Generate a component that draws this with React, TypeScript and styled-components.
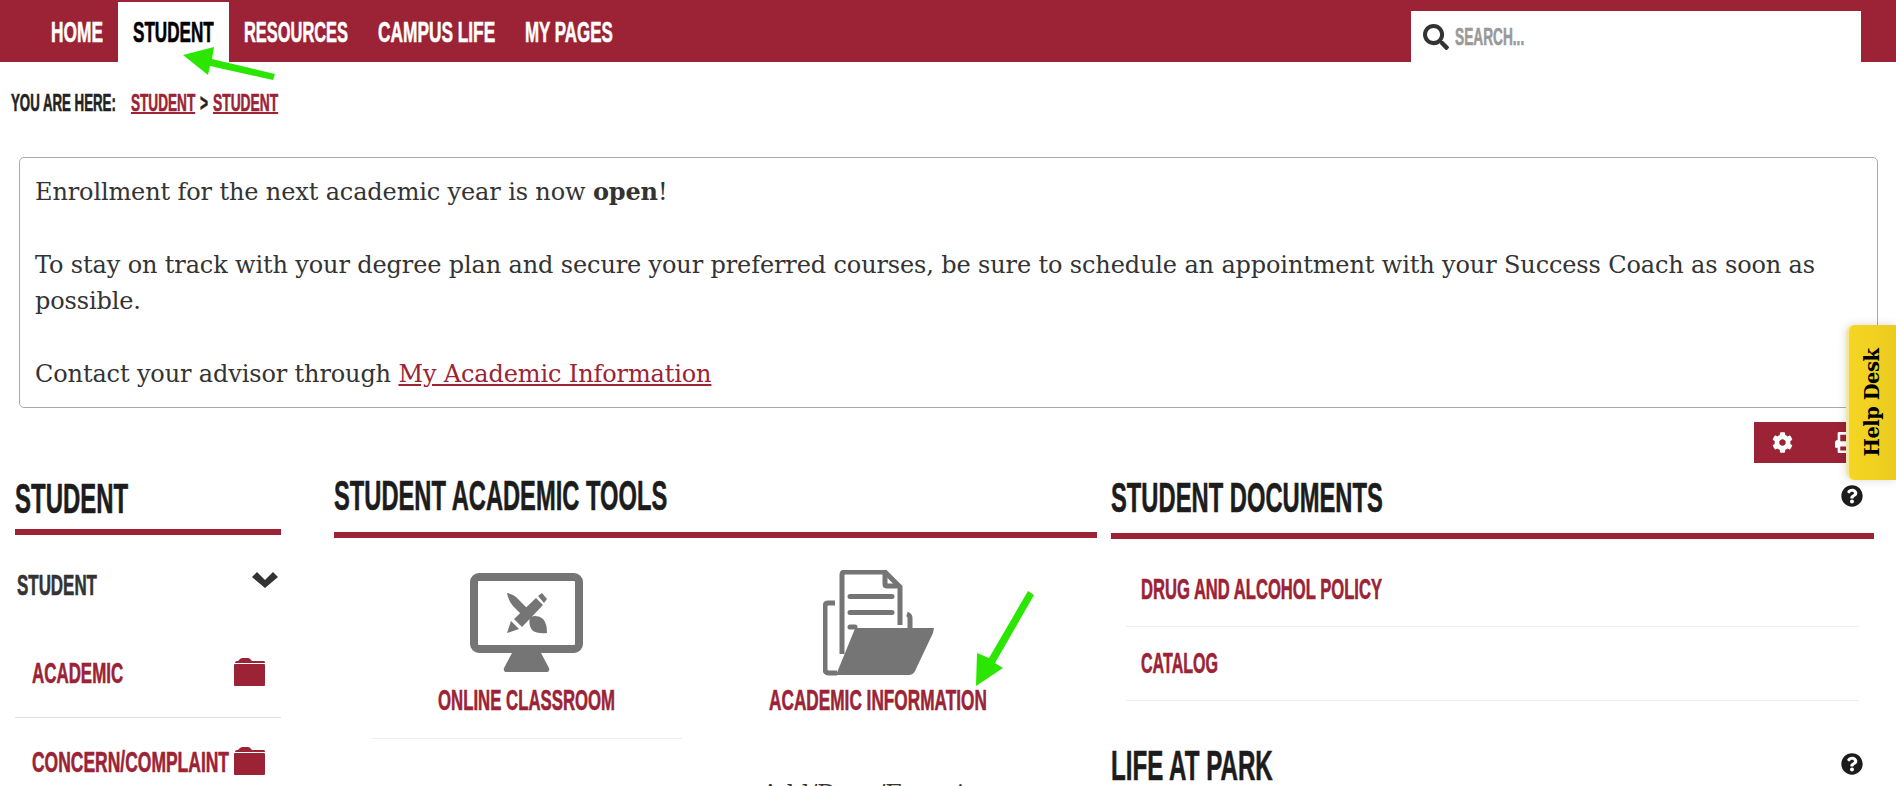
import React, { useLayoutEffect, useRef, useState } from "react";
import styled, { createGlobalStyle } from "styled-components";
import { FaCog, FaPrint, FaQuestionCircle, FaSearch } from "react-icons/fa";

const maroon = "#9b2335";
const display = `"Liberation Sans", Arial, sans-serif`;

const GlobalStyle = createGlobalStyle`
  html, body {
    margin: 0;
    padding: 0;
    height: 786px;
    overflow: hidden;
    background: #fff;
    font-family: "DejaVu Serif", serif;
    color: #333;
  }
`;

const Page = styled.div`
  position: relative;
  width: 1896px;
  height: 786px;
  overflow: hidden;
`;

const FitBox = styled.span<{ $w: number }>`
  display: inline-block;
  width: ${(p) => p.$w}px;
  white-space: nowrap;
`;

const FitInner = styled.span`
  display: inline-block;
  transform-origin: 0 50%;
  -webkit-text-stroke: 0.6px currentColor;
`;

// the site's condensed face isn't installed, so squeeze the text to its measured width
function Fit({ w, children }: { w: number; children: React.ReactNode }) {
  const ref = useRef<HTMLSpanElement>(null);
  const [k, setK] = useState(0.6);

  useLayoutEffect(() => {
    if (ref.current) setK(w / ref.current.offsetWidth);
  }, [w]);

  return (
    <FitBox $w={w}>
      <FitInner ref={ref} style={{ transform: `scaleX(${k})` }}>
        {children}
      </FitInner>
    </FitBox>
  );
}

const Header = styled.header`
  height: 62px;
  background: ${maroon};
  display: flex;
  align-items: flex-end;
  justify-content: space-between;
  padding: 0 35px 0 36px;
`;

const Nav = styled.nav`
  display: flex;
  height: 60px;
`;

const NavItem = styled.a<{ $active?: boolean }>`
  display: flex;
  align-items: center;
  padding: 0 15px;
  font: bold 30px ${display};
  color: ${(p) => (p.$active ? "#000" : "#fff")};
  background: ${(p) => (p.$active ? "#fff" : "transparent")};
`;

const SearchBox = styled.div`
  width: 450px;
  height: 51px;
  background: #fff;
  display: flex;
  align-items: center;
  gap: 6px;
  padding: 0 12px;
  box-sizing: border-box;
  font: bold 24px ${display};
  color: #999;
  svg {
    color: #333;
  }
`;

const Crumbs = styled.div`
  display: flex;
  gap: 5px;
  padding: 29px 0 0 11px;
  font: bold 24px/24px ${display};
  color: #222;
`;

const CrumbLink = styled.a`
  color: ${maroon};
  text-decoration: underline;
  text-decoration-thickness: 2px;
`;

const CrumbGap = styled.span`
  width: 5px;
`;

const Notice = styled.div`
  margin: 42px 18px 0 19px;
  height: 251px;
  box-sizing: border-box;
  border: 1px solid #aaa;
  border-radius: 5px;
  padding: 16px 16px 16px 15px;
  font-size: 24px;
  line-height: 36.4px;
  letter-spacing: -0.13px;
  p {
    margin: 0 0 36.4px;
  }
  p:last-child {
    margin: 0;
  }
  a {
    color: ${maroon};
    text-decoration: underline;
  }
`;

const ToolBar = styled.div`
  display: flex;
  justify-content: flex-end;
  margin-top: 14px;
`;

const Tools = styled.div`
  width: 142px;
  height: 41px;
  background: ${maroon};
  color: #fff;
  display: flex;
  align-items: center;
  gap: 42px;
  padding-left: 18px;
  box-sizing: border-box;
`;

const Columns = styled.div`
  display: grid;
  grid-template-columns: 305px 763px 763px;
  column-gap: 14px;
  padding-left: 15px;
  margin-top: 8px;
`;

const SideColumn = styled.section`
  padding-right: 39px;
`;

const Column = styled.section``;

const Heading = styled.div<{ $bar: number; $pad: number; $gap?: number }>`
  box-sizing: border-box;
  display: flex;
  align-items: flex-start;
  justify-content: space-between;
  height: ${(p) => p.$bar}px;
  padding: ${(p) => p.$pad}px 11px 0 0;
  margin-top: ${(p) => p.$gap ?? 0}px;
  border-bottom: 6px solid ${maroon};
  font: bold 42px/50px ${display};
  color: #1c1c1c;
  svg {
    color: #1c1c1c;
    margin-top: 12px;
  }
`;

const MenuHead = styled.div`
  display: flex;
  justify-content: space-between;
  padding: 33px 3px 27px 2px;
  font: bold 29px/34px ${display};
  color: #333;
  svg {
    margin-top: 3px;
  }
`;

const MenuItem = styled.a`
  display: flex;
  align-items: center;
  justify-content: space-between;
  height: 88px;
  padding: 0 16px 0 17px;
  border-bottom: 1px solid #ddd;
  font: bold 29px ${display};
  color: ${maroon};
  svg {
    margin-top: -3px;
  }
`;

const Tiles = styled.div`
  display: grid;
  grid-template-columns: repeat(2, 351.5px);
  padding: 28px 0 0 17px;
`;

const Tile = styled.a`
  display: flex;
  flex-direction: column;
  align-items: center;
  font: bold 29px/37px ${display};
  color: ${maroon};
`;

const TileIcon = styled.div<{ $lift: number }>`
  height: 116px;
  display: flex;
  align-items: center;
  svg {
    margin-bottom: ${(p) => p.$lift}px;
  }
`;

const Rule = styled.div`
  width: 311px;
  height: 1px;
  background: #eee;
  margin-top: 19px;
`;

const DocList = styled.div`
  padding-top: 14px;
`;

const DocLink = styled.a`
  display: flex;
  align-items: center;
  box-sizing: border-box;
  height: 74px;
  margin: 0 15px;
  padding: 0 15px;
  border-bottom: 1px solid #eee;
  font: bold 29px ${display};
  color: ${maroon};
`;

const TileText = styled.div`
  grid-column: 2;
  margin-top: 37px;
  text-align: center;
  font-size: 24px;
  line-height: 36px;
  letter-spacing: -0.15px;
`;

const HelpDesk = styled.div`
  position: absolute;
  right: 0;
  top: 325px;
  width: 50px;
  height: 155px;
  box-sizing: border-box;
  background: linear-gradient(90deg, #f6d623, #ebcb1f);
  border-left: 3px solid #f3e7a8;
  border-radius: 8px 0 0 8px;
  box-shadow: 0 0 10px rgba(0, 0, 0, 0.15);
  display: flex;
  align-items: center;
  justify-content: center;
  span {
    transform: rotate(-90deg);
    white-space: nowrap;
    font: bold 19.5px "DejaVu Serif", serif;
    letter-spacing: -0.5px;
    color: #000;
  }
`;

const Arrow = styled.svg<{ $x: number; $y: number }>`
  position: absolute;
  left: ${(p) => p.$x}px;
  top: ${(p) => p.$y}px;
  pointer-events: none;
`;

const Chevron = () => (
  <svg width="26" height="17" viewBox="0 0 26 17">
    <path d="M0 6 5 1l8 8 8-8 5 5-13 11z" fill="#333" />
  </svg>
);

const Folder = () => (
  <svg width="31" height="28" viewBox="0 0 31 28">
    <path
      d="M1 5q0-2 2-2h1l2-2q1-1 3-1h5q2 0 3 2l1 1h12q1 0 1 2v0z"
      fill={maroon}
    />
    <rect y="6" width="31" height="22" rx="1" fill={maroon} />
  </svg>
);

const Monitor = () => (
  <svg width="113" height="99" viewBox="0 0 113 99">
    <rect x="4" y="4" width="105" height="72" rx="5" fill="none" stroke="#757575" strokeWidth="8" />
    <path d="M42 80h29l8 15q1 4-3 4H37q-4 0-3-4z" fill="#757575" />
    <path d="M37 20q7 1 12 7l9 9-6 6-9-9q-5-6-6-13z" fill="#757575" />
    <path d="M60 44q8-3 13 2 4 4 4 14-10 1-15-3-4-6-2-13z" fill="#757575" />
    <path d="M44 46 66 25l7 7-21 22zM68 23l4-3 5 6-3 4zM37 60l4-12 8 8z" fill="#757575" />
  </svg>
);

const FolderDoc = () => (
  <svg width="111" height="106" viewBox="0 0 111 106">
    <g fill="none" stroke="#757575" strokeWidth="5">
      <path d="M19 84V5q0-3 3-3h40l15 15v38" />
      <path d="M62 2v12q0 2 2 2h13" />
      <path d="M12 33H5q-3 0-3 4v62q0 4 4 4h8" />
      <path d="M84 44q3 1 3 4v10" />
    </g>
    <path d="M27 26.500h42M27 42.500h42M27 57h5" stroke="#757575" strokeWidth="5" strokeLinecap="round" />
    <path d="M34 58h77l-1 5-18 38q-2 4-6 4H13l18-44q1-3 3-3z" fill="#757575" />
  </svg>
);

export default function App() {
  return (
    <Page>
      <GlobalStyle />
      <Header>
        <Nav>
          <NavItem><Fit w={52}>HOME</Fit></NavItem>
          <NavItem $active><Fit w={81}>STUDENT</Fit></NavItem>
          <NavItem><Fit w={104}>RESOURCES</Fit></NavItem>
          <NavItem><Fit w={117}>CAMPUS LIFE</Fit></NavItem>
          <NavItem><Fit w={88}>MY PAGES</Fit></NavItem>
        </Nav>
        <SearchBox>
          <FaSearch size={26} />
          <Fit w={69}>SEARCH...</Fit>
        </SearchBox>
      </Header>
      <Crumbs>
        <Fit w={105}>YOU ARE HERE:</Fit>
        <CrumbGap />
        <Fit w={64}><CrumbLink>STUDENT</CrumbLink></Fit>
        <Fit w={8}>&gt;</Fit>
        <Fit w={65}><CrumbLink>STUDENT</CrumbLink></Fit>
      </Crumbs>
      <Notice>
        <p>
          Enrollment for the next academic year is now <b>open</b>!
        </p>
        <p>
          To stay on track with your degree plan and secure your preferred courses, be sure to
          schedule an appointment with your Success Coach as soon as possible.
        </p>
        <p>
          Contact your advisor through <a>My Academic Information</a>
        </p>
      </Notice>
      <ToolBar>
        <Tools>
          <FaCog size={21} />
          <FaPrint size={21} />
        </Tools>
      </ToolBar>
      <Columns>
        <SideColumn>
          <Heading $bar={64} $pad={3}><Fit w={113}>STUDENT</Fit></Heading>
          <MenuHead>
            <Fit w={80}>STUDENT</Fit>
            <Chevron />
          </MenuHead>
          <MenuItem>
            <Fit w={91}>ACADEMIC</Fit>
            <Folder />
          </MenuItem>
          <MenuItem>
            <Fit w={197}>CONCERN/COMPLAINT</Fit>
            <Folder />
          </MenuItem>
        </SideColumn>
        <Column>
          <Heading $bar={67} $pad={0}><Fit w={333}>STUDENT ACADEMIC TOOLS</Fit></Heading>
          <Tiles>
            <Tile>
              <TileIcon $lift={4}><Monitor /></TileIcon>
              <Fit w={177}>ONLINE CLASSROOM</Fit>
              <Rule />
            </Tile>
            <Tile>
              <TileIcon $lift={2}><FolderDoc /></TileIcon>
              <Fit w={218}>ACADEMIC INFORMATION</Fit>
            </Tile>
            <TileText>Add/Drop/Excusing</TileText>
          </Tiles>
        </Column>
        <Column>
          <Heading $bar={68} $pad={2}>
            <Fit w={272}>STUDENT DOCUMENTS</Fit>
            <FaQuestionCircle size={22} />
          </Heading>
          <DocList>
            <DocLink><Fit w={241}>DRUG AND ALCOHOL POLICY</Fit></DocLink>
            <DocLink><Fit w={77}>CATALOG</Fit></DocLink>
          </DocList>
          <Heading $bar={68} $pad={2} $gap={38}>
            <Fit w={162}>LIFE AT PARK</Fit>
            <FaQuestionCircle size={22} />
          </Heading>
        </Column>
      </Columns>
      <Arrow $x={180} $y={45} width="100" height="40" viewBox="0 0 100 40">
        <path d="M3 10 34 2l-2 12 63 15-2 6-63-14-2 9z" fill="#2ae600" />
      </Arrow>
      <Arrow $x={970} $y={585} width="70" height="105" viewBox="0 0 70 105">
        <path d="M6 101 7 68l12 5L58 6l6 4-39 68 8 5z" fill="#2ae600" />
      </Arrow>
      <HelpDesk>
        <span>Help Desk</span>
      </HelpDesk>
    </Page>
  );
}
